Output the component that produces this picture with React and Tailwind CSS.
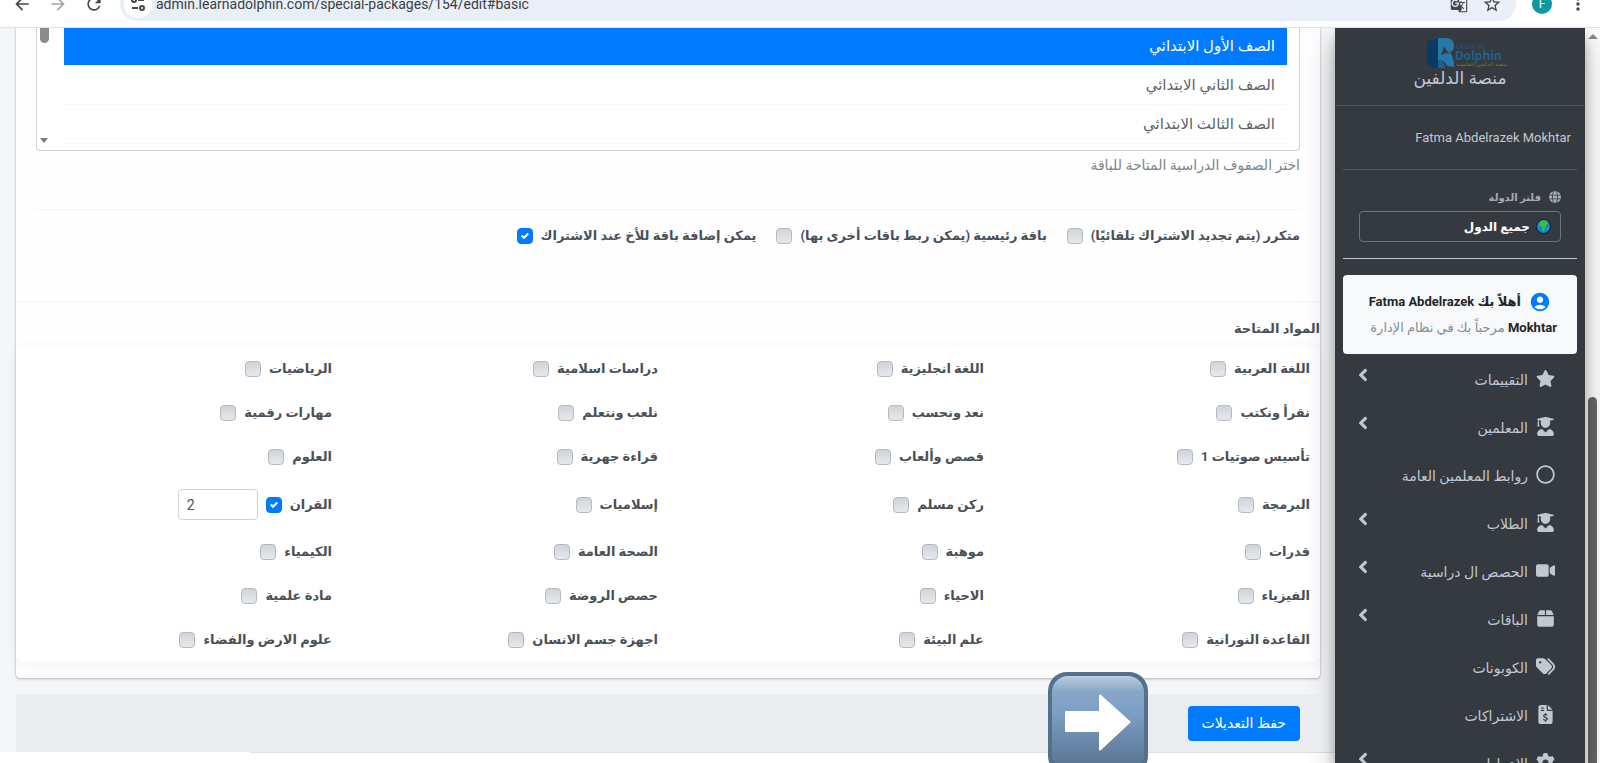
import { FaStar, FaUserGraduate, FaRegCircle, FaAngleLeft } from 'react-icons/fa';
import { FaVideo, FaBox, FaTags, FaFileInvoiceDollar, FaGear, FaGlobe } from 'react-icons/fa6';
import { MdAccountCircle, MdGTranslate, MdStarBorder, MdMoreVert, MdArrowBack, MdArrowForward, MdRefresh } from 'react-icons/md';

const GRADES = ['الصف الأول الابتدائي', 'الصف الثاني الابتدائي', 'الصف الثالث الابتدائي'];

const OPTIONS = [
  { id: 'recurring', label: 'متكرر (يتم تجديد الاشتراك تلقائيًا)' },
  { id: 'main',      label: 'باقة رئيسية (يمكن ربط باقات أخرى بها)' },
  { id: 'brother',   label: 'يمكن إضافة باقة للأخ عند الاشتراك', checked: true },
];

const SUBJECTS = [
  ['اللغة العربية', 'اللغة انجليزية', 'دراسات اسلامية', 'الرياضيات'],
  ['نقرأ ونكتب', 'نعد ونحسب', 'نلعب ونتعلم', 'مهارات رقمية'],
  ['تأسيس صوتيات 1', 'قصص وألعاب', 'قراءة جهرية', 'العلوم'],
  ['البرمجة', 'ركن مسلم', 'إسلاميات', 'القران'],
  ['قدرات', 'موهبة', 'الصحة العامة', 'الكيمياء'],
  ['الفيزياء', 'الاحياء', 'حصص الروضة', 'مادة علمية'],
  ['القاعدة النورانية', 'علم البيئة', 'اجهزة جسم الانسان', 'علوم الارض والفضاء'],
];

const COUNTS = { 'القران': 2 };

const NAV = [
  { label: 'التقييمات', Icon: FaStar, open: true },
  { label: 'المعلمين', Icon: FaUserGraduate, open: true },
  { label: 'روابط المعلمين العامة', Icon: FaRegCircle },
  { label: 'الطلاب', Icon: FaUserGraduate, open: true },
  { label: 'الحصص ال دراسية', Icon: FaVideo, open: true },
  { label: 'الباقات', Icon: FaBox, open: true },
  { label: 'الكوبونات', Icon: FaTags },
  { label: 'الاشتراكات', Icon: FaFileInvoiceDollar },
  { label: 'الإعدادات', Icon: FaGear, open: true },
];

function BrowserBar() {
  return (
    <div dir="ltr" className="relative z-10 flex h-7 shrink-0 items-end overflow-hidden border-b border-[#dfe3e6] bg-white pb-1.5">
      <div className="flex h-[34px] w-full items-center text-[#474747]">
        <button aria-label="Back" className="ml-3"><MdArrowBack size={20}/></button>
        <button aria-label="Forward" className="ml-4 text-[#a5a5a5]"><MdArrowForward size={20}/></button>
        <button aria-label="Reload" className="ml-4"><MdRefresh size={20}/></button>
        <div className="ml-4 flex h-full grow items-center rounded-full bg-[#e9eff8] pr-3.5 pl-1">
          <button aria-label="Site information" className="flex size-7 items-center justify-center rounded-full bg-white">
            <svg width="16" height="16" viewBox="0 0 16 16" fill="none" stroke="currentColor" strokeWidth="2">
              <circle cx="4" cy="4" r="2"/>
              <path d="M8 4h6M2 12h6"/>
              <circle cx="12" cy="12" r="2"/>
            </svg>
          </button>
          <input aria-label="Address" readOnly value="admin.learnadolphin.com/special-packages/154/edit#basic"
            className="ml-1 grow bg-transparent text-sm text-[#3c4043] outline-none"/>
          <button aria-label="Translate"><MdGTranslate size={18}/></button>
          <button aria-label="Bookmark" className="ml-3.5"><MdStarBorder size={20}/></button>
        </div>
        <div className="ml-4 flex size-5 items-center justify-center rounded-full bg-[#0e98a0] text-xs text-white">F</div>
        <button aria-label="Menu" className="mr-3 ml-4"><MdMoreVert size={20}/></button>
      </div>
    </div>
  );
}

function Check({ id, label, checked }) {
  return (
    <div className="flex items-center gap-2">
      <label htmlFor={id} className="text-[13px] font-bold whitespace-nowrap">{label}</label>
      <span className="relative flex size-4">
        <input id={id} type="checkbox" defaultChecked={checked}
          className="peer size-4 appearance-none rounded border border-[#b4bac0] bg-linear-to-b from-[#d0d4d9] to-[#e6e9ec] checked:border-[#007bff] checked:bg-[#007bff] checked:bg-none"/>
        <svg viewBox="0 0 8 8" className="pointer-events-none absolute inset-1 hidden size-2 peer-checked:block" fill="#fff">
          <path d="M6.56.75 2.97 4.35 1.44 2.8 0 4.26l2.97 2.99L8 2.2z"/>
        </svg>
      </span>
    </div>
  );
}

function Logo() {
  return (
    <svg width="76" height="30" viewBox="0 0 76 30" role="img" aria-label="Dolphin" className="ml-2.5 overflow-visible" style={{ direction: 'ltr' }}>
      <path d="M0 3 11 0v30L0 27z" fill="#0c3a66"/>
      <path d="M11 0h8c6 0 8 4 8 8 0 3-1 5-4 6 3 4 4 9 4 15l-7-1c-2-3-4-5-9-5z" fill="#2479a8"/>
      <path d="M11 22c5 0 7 2 9 6l-1 2h-8zM14 17c1-4 3-6 3-9l3 5 3 3-4-1z" fill="#343a40"/>
      <path d="M11 22c5 0 6 3 7 8h-7z" fill="#1c628c"/>
      <text x="29" y="11" fontSize="7" fill="#1f5878" fontFamily="DejaVu Sans">Learn At</text>
      <text x="28" y="22" fontSize="12" fontWeight="bold" fill="#20618a" fontFamily="Noto Sans">Dolphin</text>
      <text x="29" y="28" fontSize="5" fill="#92763a" fontFamily="Noto Sans">منصة الدلفين التعليمية</text>
    </svg>
  );
}

function Sidebar() {
  return (
    <aside className="relative w-[250px] shrink-0 bg-[#343a40] text-[#c2c7d0] shadow-[0_14px_28px_rgba(0,0,0,0.25),0_10px_10px_rgba(0,0,0,0.22)]">
      <a href="#home" className="flex h-[78px] flex-col items-center border-b border-[#4b545c] pt-2.5">
        <Logo/>
        <span className="text-[17px] leading-5">منصة الدلفين</span>
      </a>
      <div className="px-2">
        <a href="#profile" className="flex h-16 items-center border-b border-[#4f5962] px-1.5 text-[13px]">Fatma Abdelrazek Mokhtar</a>
        <div className="border-b border-[#c2c7d0] px-4 pt-[15px] pb-4">
          <label htmlFor="country" className="flex h-6 items-center gap-2 text-[10px] font-bold text-[#a6acb2]">
            <FaGlobe size={12}/>فلتر الدولة
          </label>
          <div className="relative mt-0.5">
            <select id="country" className="h-[31px] w-full appearance-none rounded-sm border border-[#6c757d] bg-[#343a40] pr-[30px] text-xs font-bold text-white">
              <option>جميع الدول</option>
            </select>
            <svg className="absolute top-2 right-2.5" width="15" height="15" viewBox="0 0 15 15">
              <circle cx="7.5" cy="7.5" r="7" fill="#1583d1" stroke="#0a1c2c"/>
              <path d="M4 3c2-2 5-2 7-1l1 3-2 1-1 3-1 4-2-2V8L3 7z" fill="#35c13a"/>
              <path d="m11 9 2-1-1 3z" fill="#35c13a"/>
            </svg>
          </div>
        </div>
        <div className="mt-4 flex h-[79px] flex-col justify-center rounded bg-[#f8f9fa] px-5 text-[13px] leading-[26px] whitespace-nowrap text-[#868e96]">
          <p className="flex items-center gap-2 pr-1.5 font-bold text-[#212529]">
            <MdAccountCircle size={22} className="shrink-0 text-[#007bff]"/>
            <span>أهلاً بك <bdi>Fatma Abdelrazek</bdi></span>
          </p>
          <p><strong className="text-[#212529]">Mokhtar</strong> مرحباً بك في نظام الإدارة</p>
        </div>
        <nav>
          {NAV.map(({ label, Icon, open }) => (
            <a key={label} href="#nav" className="flex h-12 items-center pr-[22px] pl-2.5 text-sm">
              <Icon size={19} className="shrink-0"/>
              <span className="mr-2 grow pt-1">{label}</span>
              {open && <FaAngleLeft size={20} className="mb-1.5"/>}
            </a>
          ))}
        </nav>
      </div>
    </aside>
  );
}

function GradeSelect() {
  return (
    <div className="relative -mt-px">
      <select id="grades" multiple size={3} defaultValue={[GRADES[0]]} aria-label="الصفوف الدراسية"
        className="block h-[124px] w-full appearance-none overflow-hidden rounded-b border border-t-0 border-[#ced4da] bg-white pr-3 pl-[27px] text-[15px] text-[#5c636a]">
        {GRADES.map(g => (
          <option key={g} value={g}
            className="flex h-[39px] items-center border-b border-[#f6f7f8] px-3 py-0 checked:bg-[linear-gradient(#007bff,#007bff)] checked:font-medium checked:[-webkit-text-fill-color:#fff]">
            {g}
          </option>
        ))}
      </select>
      <div className="absolute top-0 bottom-1 left-0.5 flex w-3 flex-col items-center justify-between">
        <span className="h-4 w-[9px] rounded-b-full bg-[#8b8b8b]"/>
        <span className="mb-1 border-x-4 border-t-[5px] border-x-transparent border-t-[#7c7c7c]"/>
      </div>
    </div>
  );
}

function SubjectPanel() {
  return (
    <div className="mt-1.5 rounded-lg bg-white shadow-[0_2px_16px_rgba(0,0,0,0.05)]">
      {SUBJECTS.map((row, r) => (
        <div key={row[0]} className="grid grid-cols-4">
          {row.map((name, c) => (
            <div key={name} className="flex min-h-11 items-center gap-2 px-2.5">
              <Check id={`subject-${r}-${c}`} label={name} checked={name in COUNTS}/>
              {name in COUNTS && (
                <input type="text" aria-label={name} defaultValue={COUNTS[name]} dir="ltr"
                  className="my-2.5 h-[31px] w-20 rounded-sm border border-[#ced4da] bg-white px-2 text-sm text-[#495057]"/>
              )}
            </div>
          ))}
        </div>
      ))}
    </div>
  );
}

function ArrowBadge() {
  return (
    <svg className="absolute right-[172px] -bottom-[23px]" width="100" height="103" viewBox="0 0 100 103">
      <defs>
        <linearGradient id="arrowFace" x1="0" y1="0" x2="0" y2="1">
          <stop offset="0" stopColor="#b9cfe3"/>
          <stop offset="0.16" stopColor="#88a6c4"/>
          <stop offset="0.34" stopColor="#7ea2c7"/>
          <stop offset="1" stopColor="#56718d"/>
        </linearGradient>
      </defs>
      <rect width="100" height="103" rx="19" fill="#55708b"/>
      <rect x="4" y="4" width="92" height="95" rx="16" fill="url(#arrowFace)"/>
      <path d="M18 39h33V23q1-1 2 0l30 27-30 28q-1 1-2 0V60H18q-1 0-1-1V40q0-1 1-1z" fill="#fff"/>
    </svg>
  );
}

export default function App() {
  return (
    <div dir="rtl" className="flex h-screen flex-col overflow-hidden bg-[#f4f6f9] font-['Roboto','Noto_Sans','DejaVu_Sans',sans-serif] text-[#495057]">
      <BrowserBar/>
      <div className="flex min-h-0 grow">
        {/* Page scrollbar */}
        <div className="flex w-[15px] shrink-0 flex-col items-center bg-[#fcfcfc] pt-1.5">
          <span className="border-x-[5px] border-b-[5px] border-x-transparent border-b-[#8b8b8b]"/>
          <span className="mt-[358px] w-[9px] grow rounded-t-full bg-[#666]"/>
        </div>
        <Sidebar/>
        <main className="flex min-w-0 grow flex-col">
          <div className="mr-[15px] ml-4 rounded-b bg-[#fefefe] pb-4 shadow-[0_0_1px_rgba(0,0,0,0.3),0_1px_3px_rgba(0,0,0,0.25)]">
            <div className="px-5">
              <GradeSelect/>
              <p className="mt-1 text-sm leading-5 text-[#7d858c]">اختر الصفوف الدراسية المتاحة للباقة</p>
              <hr className="mt-[34px] border-[#f3f4f5]"/>
              <div className="mt-3.5 flex h-6 items-center gap-5">
                {OPTIONS.map(o => <Check key={o.id} {...o}/>)}
              </div>
            </div>
            <hr className="mt-[53px] border-[#f3f4f5]"/>
            <h3 className="mt-[15px] text-[13px] leading-6 font-bold">المواد المتاحة</h3>
            <SubjectPanel/>
          </div>
          <div className="relative mt-4 mr-[15px] ml-4 flex h-[58px] shrink-0 items-center bg-[#ebecf0] px-5">
            <button className="h-[35px] rounded bg-[#007bff] px-3.5 text-sm text-white">حفظ التعديلات</button>
            <ArrowBadge/>
          </div>
          <div className="flex grow bg-white">
            <div className="grow border-t border-[#dee2e6]"/>
            <div className="w-[250px] shrink-0"/>
          </div>
        </main>
      </div>
    </div>
  );
}
